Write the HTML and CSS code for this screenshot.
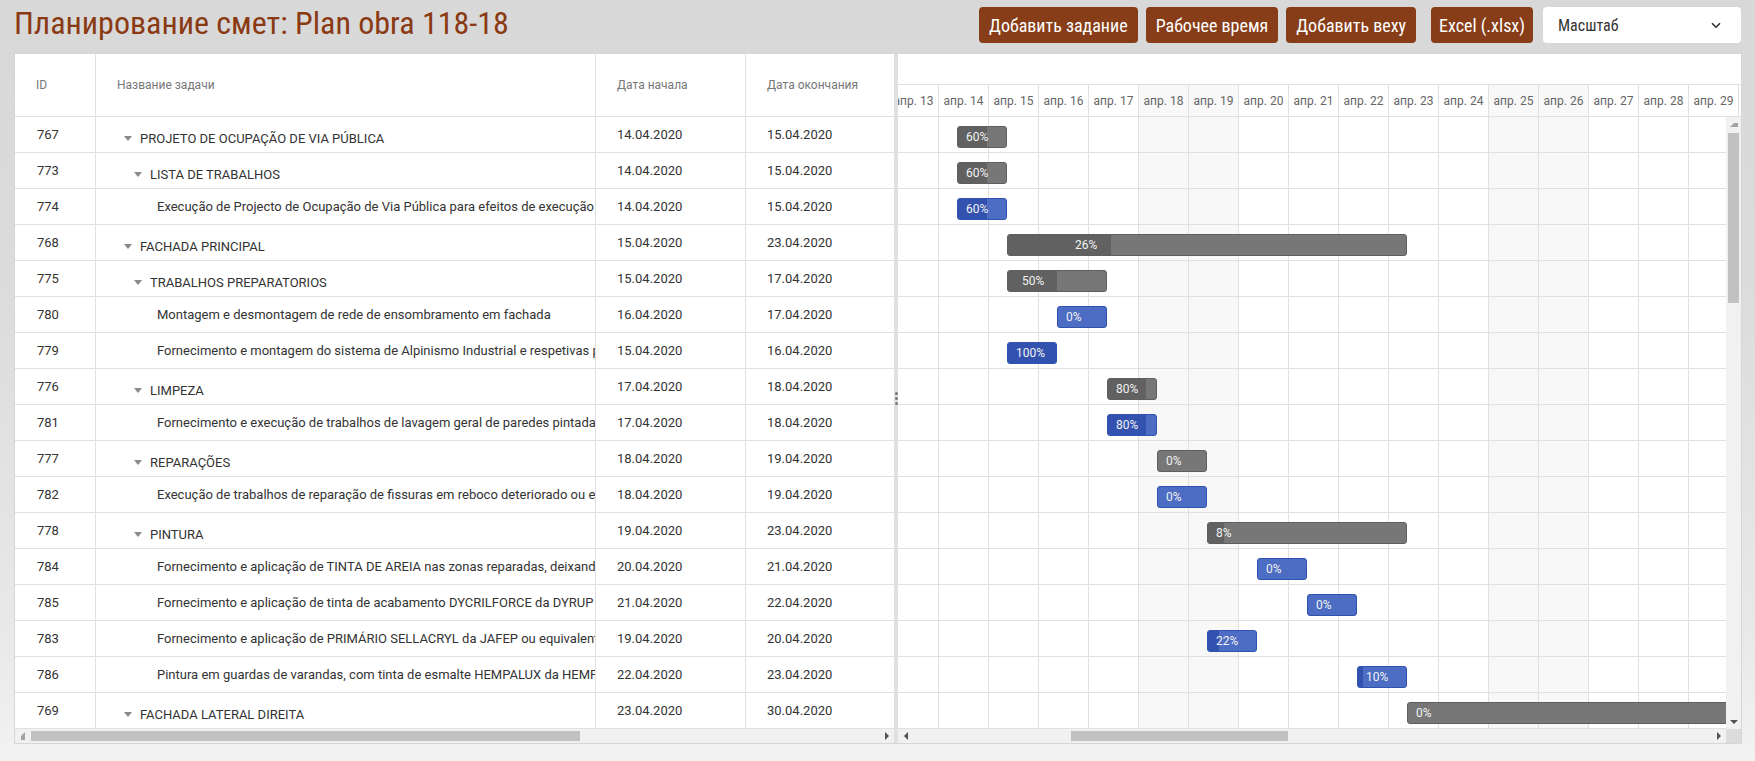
FILE: index.html
```html
<!DOCTYPE html>
<html lang="ru">
<head>
<meta charset="utf-8">
<title>Планирование смет: Plan obra 118-18</title>
<link rel="stylesheet" href="styles.css">
</head>
<body>
<header class="topbar">
  <h1 class="title">Планирование смет: Plan obra 118-18</h1>
  <div class="toolbar">
    <button class="btn">Добавить задание</button>
    <button class="btn">Рабочее время</button>
    <button class="btn">Добавить веху</button>
    <button class="btn btn-excel">Excel (.xlsx)</button>
    <div class="select"><span>Масштаб</span><svg class="chev" width="10" height="7" viewBox="0 0 10 7"><path d="M1 1.2l4 4 4-4" fill="none" stroke="#333" stroke-width="1.6"/></svg></div>
  </div>
</header>

<main class="gantt">
  <section class="grid">
    <div class="grid-head">
      <div class="hc c-id">ID</div>
      <div class="hc c-name">Название задачи</div>
      <div class="hc c-start">Дата начала</div>
      <div class="hc c-end">Дата окончания</div>
    </div>
    <div class="grid-body">
      <div class="row"><div class="cell c-id">767</div><div class="cell c-name parent l0"><i class="tri"></i>PROJETO DE OCUPAÇÃO DE VIA PÚBLICA</div><div class="cell c-start">14.04.2020</div><div class="cell c-end">15.04.2020</div></div>
      <div class="row"><div class="cell c-id">773</div><div class="cell c-name parent l1"><i class="tri"></i>LISTA DE TRABALHOS</div><div class="cell c-start">14.04.2020</div><div class="cell c-end">15.04.2020</div></div>
      <div class="row"><div class="cell c-id">774</div><div class="cell c-name l2">Execução de Projecto de Ocupação de Via Pública para efeitos de execução da obra</div><div class="cell c-start">14.04.2020</div><div class="cell c-end">15.04.2020</div></div>
      <div class="row"><div class="cell c-id">768</div><div class="cell c-name parent l0"><i class="tri"></i>FACHADA PRINCIPAL</div><div class="cell c-start">15.04.2020</div><div class="cell c-end">23.04.2020</div></div>
      <div class="row"><div class="cell c-id">775</div><div class="cell c-name parent l1"><i class="tri"></i>TRABALHOS PREPARATORIOS</div><div class="cell c-start">15.04.2020</div><div class="cell c-end">17.04.2020</div></div>
      <div class="row"><div class="cell c-id">780</div><div class="cell c-name l2">Montagem e desmontagem de rede de ensombramento em fachada</div><div class="cell c-start">16.04.2020</div><div class="cell c-end">17.04.2020</div></div>
      <div class="row"><div class="cell c-id">779</div><div class="cell c-name l2">Fornecimento e montagem do sistema de Alpinismo Industrial e respetivas proteções</div><div class="cell c-start">15.04.2020</div><div class="cell c-end">16.04.2020</div></div>
      <div class="row"><div class="cell c-id">776</div><div class="cell c-name parent l1"><i class="tri"></i>LIMPEZA</div><div class="cell c-start">17.04.2020</div><div class="cell c-end">18.04.2020</div></div>
      <div class="row"><div class="cell c-id">781</div><div class="cell c-name l2">Fornecimento e execução de trabalhos de lavagem geral de paredes pintadas</div><div class="cell c-start">17.04.2020</div><div class="cell c-end">18.04.2020</div></div>
      <div class="row"><div class="cell c-id">777</div><div class="cell c-name parent l1"><i class="tri"></i>REPARAÇÕES</div><div class="cell c-start">18.04.2020</div><div class="cell c-end">19.04.2020</div></div>
      <div class="row"><div class="cell c-id">782</div><div class="cell c-name l2">Execução de trabalhos de reparação de fissuras em reboco deteriorado ou em falta</div><div class="cell c-start">18.04.2020</div><div class="cell c-end">19.04.2020</div></div>
      <div class="row"><div class="cell c-id">778</div><div class="cell c-name parent l1"><i class="tri"></i>PINTURA</div><div class="cell c-start">19.04.2020</div><div class="cell c-end">23.04.2020</div></div>
      <div class="row"><div class="cell c-id">784</div><div class="cell c-name l2">Fornecimento e aplicação de TINTA DE AREIA nas zonas reparadas, deixando</div><div class="cell c-start">20.04.2020</div><div class="cell c-end">21.04.2020</div></div>
      <div class="row"><div class="cell c-id">785</div><div class="cell c-name l2">Fornecimento e aplicação de tinta de acabamento DYCRILFORCE da DYRUP ou equivalente</div><div class="cell c-start">21.04.2020</div><div class="cell c-end">22.04.2020</div></div>
      <div class="row"><div class="cell c-id">783</div><div class="cell c-name l2">Fornecimento e aplicação de PRIMÁRIO SELLACRYL da JAFEP ou equivalente</div><div class="cell c-start">19.04.2020</div><div class="cell c-end">20.04.2020</div></div>
      <div class="row"><div class="cell c-id">786</div><div class="cell c-name l2">Pintura em guardas de varandas, com tinta de esmalte HEMPALUX da HEMPEL</div><div class="cell c-start">22.04.2020</div><div class="cell c-end">23.04.2020</div></div>
      <div class="row"><div class="cell c-id">769</div><div class="cell c-name parent l0"><i class="tri"></i>FACHADA LATERAL DIREITA</div><div class="cell c-start">23.04.2020</div><div class="cell c-end">30.04.2020</div></div>
    </div>
    <div class="hscroll grid-scroll">
      <i class="arr arr-left dim"></i>
      <div class="track"><div class="thumb"></div></div>
      <i class="arr arr-right"></i>
    </div>
  </section>

  <div class="splitter"><span class="dot"></span><span class="dot"></span><span class="dot"></span></div>

  <section class="chart">
    <div class="chart-head">
      <div class="tier-top"></div>
      <div class="scale">
        <div class="scale-canvas">
          <div class="sc">апр. 13</div><div class="sc">апр. 14</div><div class="sc">апр. 15</div><div class="sc">апр. 16</div><div class="sc">апр. 17</div><div class="sc we">апр. 18</div><div class="sc we">апр. 19</div><div class="sc">апр. 20</div><div class="sc">апр. 21</div><div class="sc">апр. 22</div><div class="sc">апр. 23</div><div class="sc">апр. 24</div><div class="sc we">апр. 25</div><div class="sc we">апр. 26</div><div class="sc">апр. 27</div><div class="sc">апр. 28</div><div class="sc">апр. 29</div><div class="sc">апр. 30</div>
        </div>
      </div>
    </div>
    <div class="chart-mid">
      <div class="chart-body">
        <div class="canvas">
          <div class="grow"><div class="bar proj" style="left:68px;width:50px"><div class="prog" style="width:60%"></div><span class="txt">60%</span></div></div>
          <div class="grow"><div class="bar proj" style="left:68px;width:50px"><div class="prog" style="width:60%"></div><span class="txt">60%</span></div></div>
          <div class="grow"><div class="bar task" style="left:68px;width:50px"><div class="prog" style="width:60%"></div><span class="txt">60%</span></div></div>
          <div class="grow"><div class="bar proj" style="left:118px;width:400px;--tx:67px"><div class="prog" style="width:26%"></div><span class="txt">26%</span></div></div>
          <div class="grow"><div class="bar proj" style="left:118px;width:100px;--tx:14px"><div class="prog" style="width:50%"></div><span class="txt">50%</span></div></div>
          <div class="grow"><div class="bar task" style="left:168px;width:50px"><div class="prog" style="width:0%"></div><span class="txt">0%</span></div></div>
          <div class="grow"><div class="bar task" style="left:118px;width:50px"><div class="prog" style="width:100%"></div><span class="txt">100%</span></div></div>
          <div class="grow"><div class="bar proj" style="left:218px;width:50px"><div class="prog" style="width:80%"></div><span class="txt">80%</span></div></div>
          <div class="grow"><div class="bar task" style="left:218px;width:50px"><div class="prog" style="width:80%"></div><span class="txt">80%</span></div></div>
          <div class="grow"><div class="bar proj" style="left:268px;width:50px"><div class="prog" style="width:0%"></div><span class="txt">0%</span></div></div>
          <div class="grow"><div class="bar task" style="left:268px;width:50px"><div class="prog" style="width:0%"></div><span class="txt">0%</span></div></div>
          <div class="grow"><div class="bar proj" style="left:318px;width:200px"><div class="prog" style="width:8%"></div><span class="txt">8%</span></div></div>
          <div class="grow"><div class="bar task" style="left:368px;width:50px"><div class="prog" style="width:0%"></div><span class="txt">0%</span></div></div>
          <div class="grow"><div class="bar task" style="left:418px;width:50px"><div class="prog" style="width:0%"></div><span class="txt">0%</span></div></div>
          <div class="grow"><div class="bar task" style="left:318px;width:50px"><div class="prog" style="width:22%"></div><span class="txt">22%</span></div></div>
          <div class="grow"><div class="bar task" style="left:468px;width:50px"><div class="prog" style="width:10%"></div><span class="txt">10%</span></div></div>
          <div class="grow"><div class="bar proj" style="left:518px;width:350px"><div class="prog" style="width:0%"></div><span class="txt">0%</span></div></div>
        </div>
      </div>
      <div class="vscroll">
        <i class="arr arr-up dim"></i>
        <div class="vtrack"><div class="vthumb"></div></div>
        <i class="arr arr-down"></i>
      </div>
    </div>
    <div class="chart-foot">
      <div class="hscroll chart-scroll">
        <i class="arr arr-left"></i>
        <div class="track"><div class="thumb"></div></div>
        <i class="arr arr-right"></i>
      </div>
      <div class="corner"></div>
    </div>
  </section>
</main>
</body>
</html>
```

FILE: styles.css
```css
* { box-sizing: border-box; }
html, body { margin: 0; height: 100%; }
body {
  font-family: Roboto, "Liberation Sans", sans-serif;
  color: #333;
  background: linear-gradient(180deg, #d8d8d8 0, #dcdcdc 300px, #e9e9e9 640px, #f2f2f2 761px);
  overflow: hidden;
}

/* top bar */
.topbar {
  height: 53px;
  display: flex;
  justify-content: space-between;
  align-items: flex-start;
  padding: 7px 14px 0 14px;
}
.title {
  margin: 0;
  font-family: "Roboto Condensed", "Liberation Sans Narrow", Roboto, sans-serif;
  font-stretch: condensed;
  font-weight: 400;
  font-size: 32px;
  line-height: 32px;
  color: #8a3a13;
}
.toolbar { display: flex; gap: 8px; }
.btn {
  height: 36px;
  padding: 0 10px;
  border: 0;
  border-radius: 4px;
  background: #873d18;
  color: #fff;
  font-family: "Roboto Condensed", "Liberation Sans Narrow", Roboto, sans-serif;
  font-stretch: condensed;
  font-size: 18px;
}
.btn-excel { margin-left: 7px; padding: 0 8px; }
.select {
  width: 198px;
  height: 36px;
  margin-left: 2px;
  background: #fff;
  border-radius: 4px;
  display: flex;
  align-items: center;
  justify-content: space-between;
  padding: 0 20px 0 15px;
  font-family: "Roboto Condensed", "Liberation Sans Narrow", Roboto, sans-serif;
  font-stretch: condensed;
  font-size: 16px;
  color: #333;
}

/* gantt */
.gantt {
  margin: 0 13px 0 14px;
  height: 691px;
  background: #fff;
  border: 1px solid #d6d6d6;
  display: flex;
}
.grid { width: 879px; display: flex; flex-direction: column; }
.grid-head, .row { display: flex; }
.grid-head { height: 63px; border-bottom: 1px solid #e0e0e0; }
.hc {
  display: flex;
  align-items: center;
  padding-left: 21px;
  font-size: 12px;
  color: #777;
  border-right: 1px solid #e0e0e0;
}
.c-id { width: 81px; }
.c-name { width: 500px; }
.c-start { width: 150px; }
.c-end { width: 148px; border-right: 0; }
.grid-body { flex: 1; overflow: hidden; }
.row { height: 36px; border-bottom: 1px solid #e0e0e0; }
.cell {
  display: flex;
  align-items: center;
  padding-left: 21px;
  font-size: 13px;
  color: #333;
  white-space: nowrap;
  overflow: hidden;
  border-right: 1px solid #e0e0e0;
}
.cell.c-id { padding-left: 22px; }
.cell.c-end { border-right: 0; }
.cell.parent { padding-top: 7px; }
.cell.l0 { padding-left: 28px; }
.cell.l1 { padding-left: 38px; }
.cell.l2 { padding-left: 61px; }
.tri {
  width: 0; height: 0;
  border-left: 4px solid transparent;
  border-right: 4px solid transparent;
  border-top: 5px solid #8a8a8a;
  margin-right: 8px;
}

/* scrollbars */
.hscroll {
  height: 14px;
  background: #f1f1f1;
  display: flex;
  align-items: center;
}
.track { flex: 1; height: 100%; display: flex; align-items: center; }
.thumb { height: 10px; background: #c1c1c1; }
.grid-scroll .thumb { margin-left: 1px; width: 549px; }
.chart-scroll .thumb { margin-left: 158px; width: 217px; }
.arr { width: 15px; height: 14px; display: flex; align-items: center; justify-content: center; }
.arr::before { content: ""; width: 0; height: 0; }
.arr-left::before { border-top: 4px solid transparent; border-bottom: 4px solid transparent; border-right: 4px solid #505050; }
.arr-right::before { border-top: 4px solid transparent; border-bottom: 4px solid transparent; border-left: 4px solid #505050; }
.arr-up::before { border-left: 4px solid transparent; border-right: 4px solid transparent; border-bottom: 4px solid #505050; }
.arr-down::before { border-left: 4px solid transparent; border-right: 4px solid transparent; border-top: 4px solid #505050; }
.arr.dim::before { border-right-color: #a3a3a3; border-bottom-color: #a3a3a3; }

.splitter {
  width: 4px;
  background: #e0e0e0;
  display: flex;
  flex-direction: column;
  align-items: center;
  justify-content: center;
  gap: 2px;
}
.dot { width: 3px; height: 3px; border-radius: 50%; background: #777; }

.chart { flex: 1; min-width: 0; display: flex; flex-direction: column; }
.chart-head { height: 63px; overflow: hidden; }
.tier-top { height: 31px; border-bottom: 1px solid #e0e0e0; }
.scale { height: 32px; border-bottom: 1px solid #e0e0e0; overflow: hidden; }
.scale-canvas { display: flex; margin-left: -9px; height: 100%; }
.sc {
  flex: 0 0 50px;
  border-right: 1px solid #e0e0e0;
  display: flex;
  align-items: center;
  justify-content: center;
  font-size: 12px;
  color: #666;
  white-space: nowrap;
}
.sc.we { background: #f8f8f8; }

.chart-mid { flex: 1; display: flex; min-height: 0; }
.chart-body { flex: 1; overflow: hidden; }
.canvas {
  width: 900px;
  margin-left: -9px;
  background:
    repeating-linear-gradient(90deg, transparent 0 49px, #e0e0e0 49px 50px),
    linear-gradient(90deg, transparent 250px, #f8f8f8 250px 350px, transparent 350px 600px, #f8f8f8 600px 700px, transparent 700px);
}
.grow { position: relative; height: 36px; border-bottom: 1px solid #e0e0e0; }
.bar {
  position: absolute;
  top: 9px;
  height: 22px;
  border-radius: 3px;
  border: 1px solid;
  overflow: hidden;
  display: flex;
  align-items: center;
}
.bar.proj { background: #777; border-color: #5f5f5f; }
.bar.proj .prog { background: #616161; }
.bar.task { background: #4c6dc3; border-color: #3252b0; }
.bar.task .prog { background: #3352b0; }
.prog { position: absolute; left: 0; top: 0; bottom: 0; }
.txt {
  position: relative;
  padding-left: var(--tx, 8px);
  font-size: 12px;
  color: #f2f2f2;
  white-space: nowrap;
}

.vscroll { width: 15px; background: #f1f1f1; display: flex; flex-direction: column; }
.vscroll .arr { width: 15px; height: 15px; }
.vtrack { flex: 1; display: flex; justify-content: center; }
.vthumb { width: 11px; height: 170px; margin-top: 1px; background: #c1c1c1; }

.chart-foot { display: flex; height: 14px; }
.chart-foot .hscroll { flex: 1; }
.corner { width: 15px; background: #dcdcdc; }
```
